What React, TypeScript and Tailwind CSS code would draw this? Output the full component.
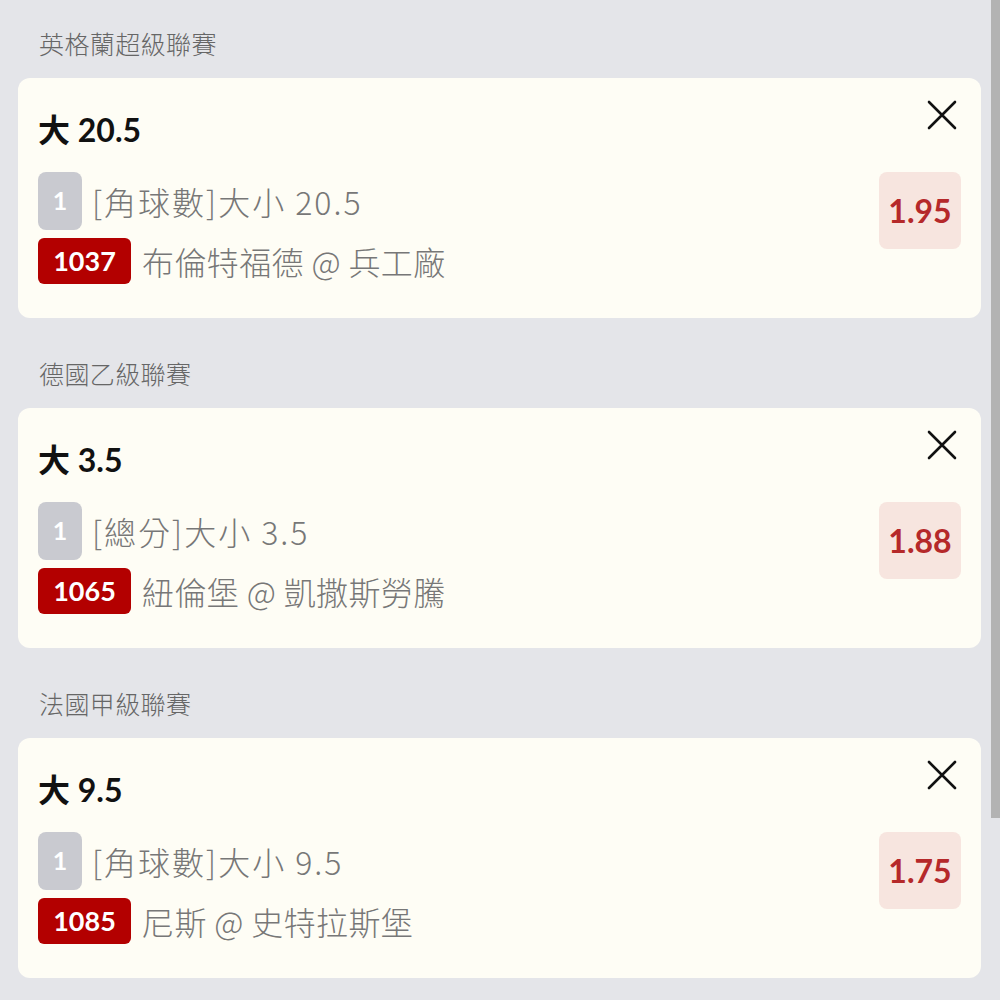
import React from 'react';

type Bet = {
  league: string;
  title: string;
  market: string;
  code: string;
  match: string;
  odds: string;
};

const bets: Bet[] = [
  { league: '英格蘭超級聯賽', title: '大 20.5', market: '[角球數]大小 20.5', code: '1037', match: '布倫特福德 @ 兵工廠', odds: '1.95' },
  { league: '德國乙級聯賽', title: '大 3.5', market: '[總分]大小 3.5', code: '1065', match: '紐倫堡 @ 凱撒斯勞騰', odds: '1.88' },
  { league: '法國甲級聯賽', title: '大 9.5', market: '[角球數]大小 9.5', code: '1085', match: '尼斯 @ 史特拉斯堡', odds: '1.75' },
];

const cjk = { fontFamily: "'Noto Sans CJK TC', sans-serif" };

const CloseIcon = () => (
  <svg width="30" height="30" viewBox="0 0 30 30" fill="none">
    <path d="M2 2 L28 28 M28 2 L2 28" stroke="#111" strokeWidth="2.6" strokeLinecap="round" />
  </svg>
);

const BetCard: React.FC<{ bet: Bet }> = ({ bet }) => (
  <div className="relative h-[240px] rounded-[12px] bg-[#fefdf5] pl-[20px] pr-[20px] pt-[32px]">
    <button className="absolute right-[24px] top-[22px]">
      <CloseIcon />
    </button>
    <p className="text-[32px] font-bold leading-[40px] text-[#111]">{bet.title}</p>
    <div className="mt-[22px] flex items-start">
      <div className="flex-1">
        <div className="flex items-center">
          <span className="flex h-[58px] w-[44px] items-center justify-center rounded-[8px] bg-[#c9cad0] text-[25px] font-bold text-white">
            1
          </span>
          <span className="ml-[10px] text-[32px] font-light leading-[40px] tracking-[2px] text-[#777]" style={cjk}>
            {bet.market}
          </span>
        </div>
        <div className="mt-[8px] flex items-center">
          <span className="flex h-[46px] w-[93px] items-center justify-center rounded-[6px] bg-[#b30000] text-[27px] font-bold text-white">
            {bet.code}
          </span>
          <span className="ml-[11px] text-[32px] font-light leading-[40px] tracking-[0.4px] text-[#777]" style={cjk}>
            {bet.match}
          </span>
        </div>
      </div>
      <div className="flex h-[77px] w-[82px] items-center justify-center rounded-[8px] bg-[#f7e5df] text-[32px] font-bold text-[#b5292a]">
        {bet.odds}
      </div>
    </div>
  </div>
);

export default function App() {
  return (
    <div
      className="relative h-[1000px] overflow-hidden bg-[#e4e5e9] pl-[18px] pr-[19px] pt-[28px]"
      style={{ fontFamily: "Lato, 'Noto Sans CJK TC', sans-serif" }}
    >
      <div className="flex flex-col gap-[40px]">
        {bets.map((bet) => (
          <section key={bet.code}>
            <h2 className="mb-[20px] pl-[21px] text-[25px] font-light leading-[30px] tracking-[0.4px] text-[#666]" style={cjk}>
              {bet.league}
            </h2>
            <BetCard bet={bet} />
          </section>
        ))}
      </div>
      {/* scrollbar thumb */}
      <div className="absolute right-0 top-0 h-[818px] w-[9px] bg-[#b3b3b3]" />
    </div>
  );
}
